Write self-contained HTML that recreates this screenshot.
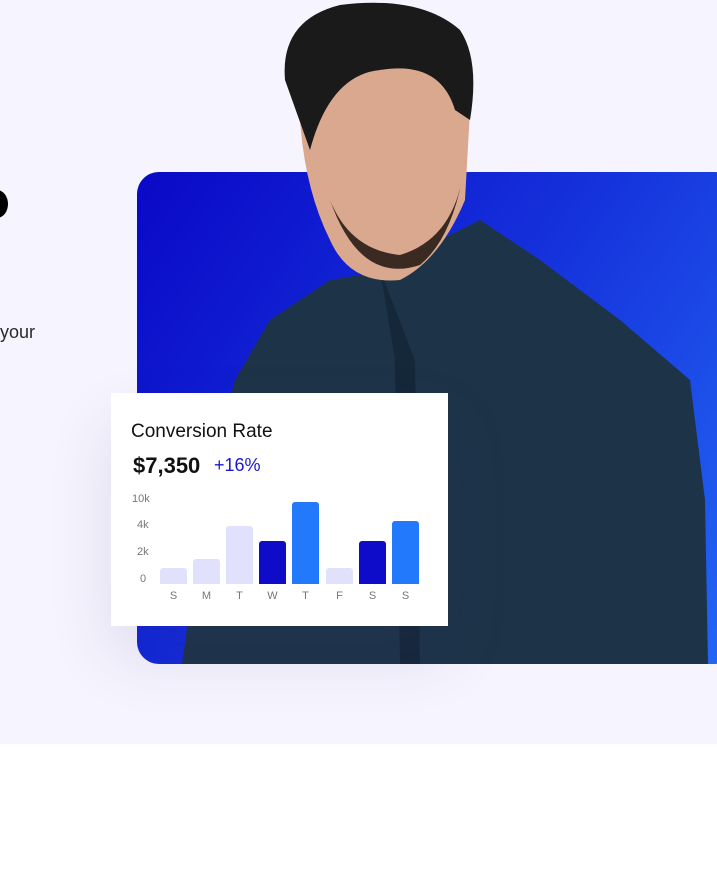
<!DOCTYPE html>
<html><head><style>
html,body{margin:0;padding:0;}
body{width:717px;height:876px;position:relative;overflow:hidden;background:#fff;font-family:"Liberation Sans",sans-serif;}
.bg{position:absolute;left:0;top:0;width:717px;height:744px;background:#f6f4fe;}
.blue{position:absolute;left:137px;top:172px;width:600px;height:492px;border-radius:22px;background:linear-gradient(125deg,#0a08c6 0%,#1532dc 50%,#2468f4 100%);}
.dot{position:absolute;left:-14px;top:190px;width:22px;height:28px;border-radius:50%;background:#000;}
.your{position:absolute;left:0;top:322px;font-size:18px;color:#2a2a2a;}
.card{position:absolute;left:111px;top:393px;width:337px;height:233px;background:#fff;box-shadow:0 30px 60px rgba(60,50,120,0.12);}
.t1{position:absolute;left:20px;top:28px;font-size:19px;color:#111;}
.t2{position:absolute;left:22px;top:60px;font-size:22px;font-weight:bold;color:#111;}
.t3{position:absolute;left:103px;top:62px;font-size:18px;color:#1a17d0;}
.yl{position:absolute;font-size:11px;color:#777;}
.bar{position:absolute;width:27px;border-radius:3px 3px 0 0;bottom:42px;}
.xl{position:absolute;top:197px;font-size:11px;color:#777;width:27px;text-align:center;}
</style></head><body>
<div class="bg"></div>
<div class="dot"></div>
<div class="your">your</div>
<div class="blue"></div>
<svg style="position:absolute;left:0;top:0" width="717" height="876">
<path d="M182 664 L205 500 L235 380 L270 320 L330 280 L390 270 L440 240 L480 220 L540 260 L620 320 L690 380 L705 500 L708 664 Z" fill="#1d3448"/>
<path d="M380 270 L415 360 L420 664 L400 664 L395 360 Z" fill="#15283a"/>
<path d="M300 120 Q300 60 330 40 Q380 0 440 30 Q475 60 470 110 L465 200 Q440 260 400 280 Q350 285 330 240 Q305 190 300 120 Z" fill="#d9a88f"/>
<path d="M285 80 Q280 20 340 5 Q420 -5 460 30 Q480 60 470 120 L455 110 Q440 60 380 70 Q330 75 310 150 Z" fill="#1a1a1a"/>
<path d="M330 200 Q360 285 420 265 Q450 240 462 180 Q450 240 400 255 Q350 250 330 200 Z" fill="#3a2a22"/>
</svg>
<div class="card">
<div class="t1">Conversion Rate</div>
<div class="t2">$7,350</div>
<div class="t3">+16%</div>
<div class="yl" style="left:21px;top:100px">10k</div>
<div class="yl" style="left:26px;top:126px">4k</div>
<div class="yl" style="left:26px;top:153px">2k</div>
<div class="yl" style="left:29px;top:180px">0</div>
<div class="bar" style="left:49px;height:16px;background:#e2e1fb"></div>
<div class="bar" style="left:82px;height:25px;background:#e2e1fb"></div>
<div class="bar" style="left:115px;height:58px;background:#e2e1fb"></div>
<div class="bar" style="left:148px;height:43px;background:#0f0cc9"></div>
<div class="bar" style="left:181px;height:82px;background:#2379fb"></div>
<div class="bar" style="left:215px;height:16px;background:#e2e1fb"></div>
<div class="bar" style="left:248px;height:43px;background:#0f0cc9"></div>
<div class="bar" style="left:281px;height:63px;background:#2379fb"></div>
<div class="xl" style="left:49px">S</div><div class="xl" style="left:82px">M</div><div class="xl" style="left:115px">T</div><div class="xl" style="left:148px">W</div><div class="xl" style="left:181px">T</div><div class="xl" style="left:215px">F</div><div class="xl" style="left:248px">S</div><div class="xl" style="left:281px">S</div>
</div>
</body></html>
